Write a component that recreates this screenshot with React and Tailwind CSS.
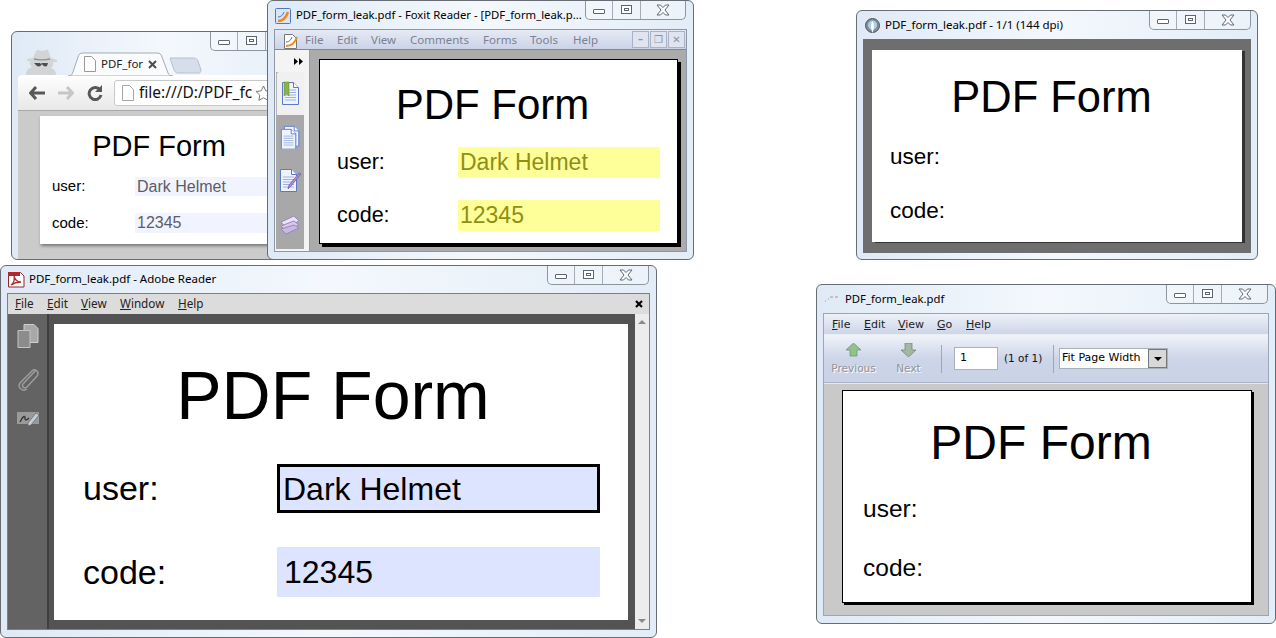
const sans = { fontFamily: '"Liberation Sans", Arial, sans-serif' };
const ui = { fontFamily: '"Noto Sans", sans-serif' };
const tah = { fontFamily: '"DejaVu Sans", sans-serif' };

function Caption({ closeW = "w-[45px]" }) {
  return (
    <div className="flex h-[19px] shrink-0 rounded-b-[5px] border border-t-0 border-[#8d959e] bg-white/30">
      <div className="flex w-[27px] items-center justify-center border-r border-[#a4acb5]">
        <div className="mt-[2px] h-[5px] w-[12px] rounded-[1px] border border-[#5c6670] bg-white"></div>
      </div>
      <div className="flex w-[28px] items-center justify-center border-r border-[#a4acb5]">
        <div className="mt-[-1px] flex h-[9px] w-[11px] items-center justify-center border border-[#5c6670] bg-white">
          <div className="h-[3px] w-[5px] border border-[#5c6670]"></div>
        </div>
      </div>
      <div className={`flex items-center justify-center ${closeW}`}>
        <svg width="14" height="12" viewBox="0 0 14 12">
          <path d="M1 1h3.500L7 3.500 9.500 1H13L9 6l4 5H9.500L7 8.500 4.500 11H1l4-5z" fill="#f8fafc" stroke="#616a73" strokeWidth="1" strokeLinejoin="round" />
        </svg>
      </div>
    </div>
  );
}

function Doc({ fill = "#eef3ff", stroke = "#5b79c9" }) {
  return (
    <>
      <path d="M1.500 1.500h11l5 5v17h-16z" fill={fill} stroke={stroke} />
      <path d="M12.500 1.500v5h5" fill="#fff" stroke={stroke} />
      <path d="M4 9h11M4 11.500h11M4 14h11M4 16.500h11M4 19h11" stroke="#9db2e2" />
    </>
  );
}

function Form({ page, title, titleText = "PDF Form", label, labelBox, rowOne, rowTwo, field, fieldOne, fieldTwo, valueOne, valueTwo, children }) {
  return (
    <div className={`flex flex-col bg-white text-black ${page}`} style={sans}>
      <div className={`text-center leading-none ${title}`}>{titleText}</div>
      <div className={`flex items-center ${rowOne}`}>
        <span className={`shrink-0 ${labelBox} ${label}`}>user:</span>
        {field && <div className={`flex h-full items-center ${fieldOne || field}`}>{valueOne}</div>}
      </div>
      <div className={`flex items-center ${rowTwo}`}>
        <span className={`shrink-0 ${labelBox} ${label}`}>code:</span>
        {field && <div className={`flex h-full items-center ${fieldTwo || field}`}>{valueTwo}</div>}
      </div>
      {children}
    </div>
  );
}

const glass = "bg-gradient-to-r from-[#dfeaf6] via-[#f4f8fd] to-[#e3edf7]";

function ChromeWindow() {
  return (
    <div className={`absolute left-[11px] top-[31px] flex h-[229px] w-[309px] flex-col overflow-hidden rounded-[6px] border border-[#686d73] ${glass}`}>
      <div className="flex h-[43px] shrink-0 items-start pl-[11px] pr-[7px]">
        <svg className="mt-[15px] shrink-0" width="37" height="28" viewBox="0 0 37 28">
          <path d="M3 28c0-5 3-7 6-8-2-2-3-4-2-6H4v-2l6-1 3-7c2-2 4 0 6 0s4-2 6-1l3 8 6 2v2h-4c1 2 0 4-2 6 3 1 5 3 5 7z" fill="#d2d4d6" />
          <path d="M11 12c4 1 12 1 16 0" stroke="#8e9194" strokeWidth="1.500" fill="none" />
          <path d="M11 16h6l1 1 1-1h6l-1 3c-2 1-4 0-5-2-1 2-3 3-5 2z" fill="#4b4d4f" />
        </svg>
        <div className="relative ml-[8px] mt-[20px] flex h-[24px] w-[105px] shrink-0 items-center">
          <svg className="absolute inset-0" width="105" height="24" viewBox="0 0 105 24">
            <path d="M0 24c3 0 4-1 5-4l5-15c1-3 2-4 5-4h74c3 0 4 1 5 4l6 16c1 2 2 3 5 3z" fill="#f9fbfd" stroke="#a4abb2" />
          </svg>
          <svg className="relative ml-[16px] shrink-0" width="12" height="16" viewBox="0 0 12 16">
            <path d="M.5.5h7l4 4v11H.5z" fill="#fff" stroke="#9a9a9a" />
          </svg>
          <span className="relative ml-[5px] w-[42px] whitespace-nowrap text-[11.500px] text-[#222]" style={ui}>PDF_for</span>
          <svg className="relative ml-[5px]" width="9" height="9" viewBox="0 0 9 9">
            <path d="M1 1l7 7M8 1L1 8" stroke="#4c4c4c" strokeWidth="2" />
          </svg>
        </div>
        <svg className="ml-[-4px] mt-[25px] shrink-0" width="33" height="17" viewBox="0 0 33 17">
          <path d="M1 1h24c2 0 3 1 4 3l3 9c0 2-1 3-2 3H9c-2 0-3-1-4-3z" fill="#d5deea" stroke="#b6c0cc" />
        </svg>
        <div className="flex-1"></div>
        <Caption />
      </div>
      <div className="ml-[6px] flex h-[36px] shrink-0 items-center rounded-t-[4px] border-b border-[#a9a9a9] bg-gradient-to-b from-white to-[#e8e8e8] pl-[11px]">
        <svg width="16" height="14" viewBox="0 0 16 14">
          <path d="M7 1L1.500 7 7 13M2 7h14" fill="none" stroke="#585858" strokeWidth="3" />
        </svg>
        <svg className="ml-[13px]" width="16" height="14" viewBox="0 0 16 14">
          <path d="M9 1l5.500 6L9 13M14 7H0" fill="none" stroke="#c6c6c6" strokeWidth="3" />
        </svg>
        <svg className="ml-[13px]" width="16" height="16" viewBox="0 0 16 16">
          <path d="M13 5a6 6 0 1 0 1 5" fill="none" stroke="#585858" strokeWidth="3" />
          <path d="M15 0v7H8z" fill="#585858" />
        </svg>
        <div className="ml-[11px] flex h-[26px] flex-1 items-center overflow-hidden rounded-[3px] border border-[#c8c8c8] bg-white pl-[7px]">
          <svg className="shrink-0" width="12" height="16" viewBox="0 0 12 16">
            <path d="M.5.5h7l4 4v11H.5z" fill="#fff" stroke="#a5a5a5" />
          </svg>
          <span className="ml-[5px] whitespace-nowrap text-[15.500px] text-[#111]" style={ui}>file:///D:/PDF_fc</span>
          <svg className="ml-[3px] shrink-0" width="17" height="16" viewBox="0 0 17 16">
            <path d="M8.500 1l2.300 4.800 5.200.7-3.800 3.600.9 5.200-4.600-2.500-4.600 2.500.9-5.200L1 6.500l5.200-.7z" fill="#fff" stroke="#777" />
          </svg>
        </div>
      </div>
      <div className="ml-[6px] flex-1 bg-[#cbcbcb] pl-[22px] pt-[5px]">
        <Form
          page="h-[128px] w-[265px] pt-[16px] pl-[12px] shadow-[1px_2px_3px_#777]"
          title="pr-[39px] text-[29px]"
          label="text-[15px]"
          labelBox="w-[83px]"
          rowOne="mt-[16px] h-[19px]"
          rowTwo="mt-[17px] h-[20px]"
          field="w-[160px] bg-[#f1f4ff] pl-[2px] text-[16px] text-[#5b5d66]"
          valueOne="Dark Helmet"
          valueTwo="12345"
        />
      </div>
    </div>
  );
}

function FoxitWindow() {
  const menu = [["File", "w-[32px]"], ["Edit", "w-[34px]"], ["View", "w-[39px]"], ["Comments", "w-[73px]"], ["Forms", "w-[47px]"], ["Tools", "w-[43px]"], ["Help", "w-[40px]"]];
  return (
    <div className={`absolute left-[267px] top-0 flex h-[260px] w-[427px] flex-col rounded-[6px] border border-[#686d73] ${glass}`}>
      <div className="flex h-[28px] shrink-0 items-start pl-[7px] pr-[7px]">
        <svg className="mt-[7px] shrink-0" width="16" height="16" viewBox="0 0 16 16">
          <rect x=".5" y=".5" width="15" height="15" rx="1" fill="#d8e4f7" stroke="#4e78c4" />
          <path d="M3 13c5 0 8-3 10-9" fill="none" stroke="#ef8a1d" strokeWidth="2.500" />
          <path d="M3 9c3 0 5-2 6-5" fill="none" stroke="#4e78c4" />
        </svg>
        <span className="ml-[5px] mt-[5px] min-w-0 flex-1 whitespace-nowrap text-[11.300px] leading-[18px] text-black" style={ui}>PDF_form_leak.pdf - Foxit Reader - [PDF_form_leak.p...</span>
        <Caption closeW="w-[44px]" />
      </div>
      <div className="ml-[6px] mr-[6px] flex h-[223px] flex-col border border-[#8c98a8] bg-[#f4f4f4]">
        <div className="flex h-[20px] shrink-0 items-center border-b border-[#7f8a99] bg-gradient-to-b from-[#e6eaf5] to-[#cbd3e8] pl-[9px] pr-[1px]">
          <svg className="shrink-0" width="14" height="18" viewBox="0 0 14 18">
            <path d="M.5 3.500h8l4 4V17.500H.5z" fill="#fff" stroke="#777" />
            <path d="M2 15c5 0 9-3 11-9" fill="none" stroke="#ef8a1d" strokeWidth="2" />
            <path d="M2 11c3 0 5-2 6-5" fill="none" stroke="#4e78c4" />
          </svg>
          <div className="ml-[7px] flex flex-1 text-[11.500px] text-[#7b8190]" style={ui}>
            {menu.map(([t, w]) => <span key={t} className={w}>{t}</span>)}
          </div>
          {["–", "❐", "✕"].map((g, i) => (
            <div key={i} className="ml-[1px] flex h-[17px] w-[17px] items-center justify-center border border-[#a9b3c3] bg-[#dfe4f0] text-[10px] font-bold leading-none text-[#8a93a3]" style={tah}>{g}</div>
          ))}
        </div>
        <div className="flex flex-1 overflow-hidden">
          <div className="flex w-[35px] shrink-0 flex-col border-r border-[#9a9a9a] bg-[#f4f4f4]">
            <div className="flex h-[22px] shrink-0 items-center justify-end pr-[6px]">
              <svg width="9" height="7" viewBox="0 0 9 7"><path d="M0 0l4 3.500L0 7zM5 0l4 3.500L5 7z" fill="#000" /></svg>
            </div>
            <div className="mb-[2px] ml-[1px] mr-[5px] flex flex-1 flex-col bg-[#a8a8a8]">
              <div className="flex h-[43px] shrink-0 items-center justify-center rounded-tl-[3px] border-l border-[#b5b5b5] bg-[#f0f0f0]">
                <svg width="19" height="25" viewBox="0 0 19 25">
                  <Doc />
                  <path d="M3 1h5v14l-2.500-2L3 15z" fill="#8bb34a" stroke="#5e8a2a" strokeWidth=".5" />
                </svg>
              </div>
              <div className="mt-[10px] flex justify-center">
                <svg width="20" height="24" viewBox="0 0 20 24">
                  <g transform="translate(3 0) scale(.9)"><Doc /></g>
                  <g transform="translate(0 3) scale(.9)"><Doc /></g>
                </svg>
              </div>
              <div className="mt-[19px] flex justify-center">
                <svg width="23" height="24" viewBox="0 0 23 24">
                  <Doc />
                  <path d="M9 21l1-4 10-12 2 1-10 12z" fill="#a98ed0" stroke="#6f55a0" strokeWidth=".7" />
                </svg>
              </div>
              <div className="mt-[23px] flex justify-center">
                <svg width="20" height="20" viewBox="0 0 20 20">
                  <path d="M1 7L14 1l5 5-13 7z" fill="#e9e2f5" stroke="#9a86c0" />
                  <path d="M1 11l13-5 5 4-13 6z" fill="#d6c9ea" stroke="#9a86c0" />
                  <path d="M1 14l13-4 5 3-13 6z" fill="#c9b8e2" stroke="#9a86c0" />
                </svg>
              </div>
            </div>
          </div>
          <div className="flex-1 bg-[#ababab] pl-[9px] pt-[9px]">
            <Form
              page="h-[185px] w-[359px] border border-black pl-[17px] pt-[24px] shadow-[3px_3px_0_#000]"
              title="pr-[29px] text-[42px]"
              label="text-[21.500px]"
              labelBox="w-[121px]"
              rowOne="mt-[21px] h-[31px]"
              rowTwo="mt-[22px] h-[31px]"
              field="w-[202px] bg-[#ffff99] pl-[2px] text-[23px] text-[#8f8f14]"
              valueOne="Dark Helmet"
              valueTwo="12345"
            />
          </div>
        </div>
      </div>
    </div>
  );
}

function AdobeWindow() {
  const menu = [["F", "ile", "w-[32px]"], ["E", "dit", "w-[34px]"], ["V", "iew", "w-[39px]"], ["W", "indow", "w-[58px]"], ["H", "elp", "w-[40px]"]];
  return (
    <div className={`absolute left-0 top-[265px] flex h-[373px] w-[657px] flex-col rounded-[6px] border border-[#686d73] ${glass}`}>
      <div className="flex h-[27px] shrink-0 items-start pl-[7px] pr-[7px]">
        <svg className="mt-[5px] shrink-0" width="17" height="17" viewBox="0 0 17 17">
          <path d="M.5 1.500h12l3.500 3.500v11H.5z" fill="#fff" stroke="#8a2a2a" />
          <path d="M0 1h12v4H0z" fill="#b5282a" />
          <path d="M3 14c3-2 4-6 3-9 1 4 3 6 7 6-3 0-7 1-10 3z" fill="none" stroke="#b5282a" strokeWidth="1.300" />
        </svg>
        <span className="ml-[4px] mt-[4px] flex-1 whitespace-nowrap text-[11.500px] leading-[18px] text-black" style={ui}>PDF_form_leak.pdf - Adobe Reader</span>
        <Caption />
      </div>
      <div className="mx-[6px] flex h-[337px] flex-col border border-[#7f7f7f] bg-[#535353]">
        <div className="flex h-[20px] shrink-0 items-center bg-[#dcdcdc] pl-[7px] pr-[6px] text-[11.700px] text-[#222]" style={ui}>
          <div className="flex flex-1">
            {menu.map(([a, b, w]) => <span key={a} className={w}><span className="underline">{a}</span>{b}</span>)}
          </div>
          <svg width="8" height="8" viewBox="0 0 8 8"><path d="M1 1l6 6M7 1L1 7" stroke="#000" strokeWidth="2.200" /></svg>
        </div>
        <div className="flex min-h-0 flex-1">
          <div className="flex w-[41px] shrink-0 flex-col items-center border-r-2 border-[#3f3f3f] bg-[#636363] pt-[10px]">
            <svg width="22" height="24" viewBox="0 0 22 24">
              <path d="M7 .5h10l4 4v14H7z" fill="#a8a8a8" stroke="#d0d0d0" />
              <path d="M1 6.500h12v17H1z" fill="#8c8c8c" stroke="#c4c4c4" />
            </svg>
            <svg className="mt-[19px]" width="22" height="24" viewBox="0 0 22 24">
              <path d="M19 3L6 17c-2 3 2 5 4 3L20 9c3-4-2-8-5-5L3 16c-3 5 3 9 7 6" fill="none" stroke="#9c9c9c" strokeWidth="1.500" />
            </svg>
            <svg className="mt-[18px]" width="24" height="20" viewBox="0 0 24 20">
              <path d="M1 3h22v12H1z" fill="#9a9a9a" />
              <path d="M4 13c3-6 5-7 5-4 0 3 2 2 4 0" fill="none" stroke="#333" strokeWidth="1.300" />
              <path d="M12 17l3-1 8-10-3-2-8 10z" fill="#c5ced8" stroke="#555" strokeWidth=".6" />
            </svg>
          </div>
          <div className="min-w-0 flex-1 pl-[5px] pr-[7px] pt-[10px]">
            <Form
              page="h-[296px] w-[574px] pl-[29px] pt-[37px]"
              title="pr-[45px] text-[68px]"
              label="text-[34px]"
              labelBox="w-[194px]"
              rowOne="mt-[35px] h-[49px]"
              rowTwo="mt-[34px] h-[50px]"
              field="w-[323px] bg-[#dde4ff] pl-[7px] text-[32px] text-black"
              fieldOne="w-[323px] border-[3px] border-black bg-[#dde4ff] pl-[3px] text-[32px] text-black"
              valueOne="Dark Helmet"
              valueTwo="12345"
            />
          </div>
          <div className="flex w-[14px] shrink-0 flex-col items-center justify-between bg-[#ececec] py-[6px]">
            <div className="h-0 w-0 border-x-[4px] border-b-[4px] border-x-transparent border-b-[#8a8a8a]"></div>
            <div className="h-0 w-0 border-x-[4px] border-t-[4px] border-x-transparent border-t-[#8a8a8a]"></div>
          </div>
        </div>
      </div>
    </div>
  );
}

function XpdfWindow() {
  return (
    <div className={`absolute left-[856px] top-[10px] flex h-[250px] w-[402px] flex-col rounded-[6px] border border-[#686d73] ${glass}`}>
      <div className="flex h-[28px] shrink-0 items-start pl-[8px] pr-[6px]">
        <svg className="mt-[7px] shrink-0" width="15" height="16" viewBox="0 0 15 16">
          <circle cx="7.500" cy="7.500" r="7" fill="#7f8c99" stroke="#4c5660" />
          <circle cx="7.500" cy="7" r="4.500" fill="#a9d0ee" />
          <path d="M7.500 3c-2 3-2 7 0 12 2-5 2-9 0-12z" fill="#fff" />
        </svg>
        <span className="ml-[5px] mt-[5px] flex-1 whitespace-nowrap text-[11.500px] leading-[18px] text-black" style={ui}>PDF_form_leak.pdf - 1/1 (144 dpi)</span>
        <Caption />
      </div>
      <div className="mx-[6px] h-[214px] bg-[#6e6e6e] pl-[9px] pt-[11px]">
        <Form
          page="h-[192px] w-[370px] pl-[18px] pt-[26px] shadow-[3px_1px_0_#333]"
          title="pr-[29px] text-[43.500px]"
          label="text-[22.500px]"
          labelBox="w-[121px]"
          rowOne="mt-[22px] h-[30px]"
          rowTwo="mt-[24px] h-[30px]"
        />
      </div>
    </div>
  );
}

function EvinceWindow() {
  const menu = [["F", "ile", "w-[32px]"], ["E", "dit", "w-[34px]"], ["V", "iew", "w-[39px]"], ["G", "o", "w-[29px]"], ["H", "elp", "w-[40px]"]];
  return (
    <div className={`absolute left-[816px] top-[284px] flex h-[340px] w-[460px] flex-col rounded-[6px] border border-[#686d73] ${glass}`}>
      <div className="flex h-[28px] shrink-0 items-start pl-[8px] pr-[7px]">
        <svg className="mt-[11px] shrink-0" width="14" height="6" viewBox="0 0 14 6">
          <path d="M0 5h1M3 3h1M5 1h3M10 1h3" stroke="#9a9a9a" strokeWidth="1" />
        </svg>
        <span className="ml-[6px] mt-[5px] flex-1 whitespace-nowrap text-[11.300px] leading-[18px] text-black" style={ui}>PDF_form_leak.pdf</span>
        <Caption />
      </div>
      <div className="mx-[6px] flex h-[303px] flex-col border border-[#9aa5b5] bg-[#c9c9c9]">
        <div className="flex h-[21px] shrink-0 items-center border-b border-[#e9edf6] bg-gradient-to-b from-[#eef1f8] to-[#cdd5e8] pl-[8px] pt-[2px] text-[11px] text-[#222]" style={tah}>
          {menu.map(([a, b, w]) => <span key={a} className={w}><span className="underline">{a}</span>{b}</span>)}
        </div>
        <div className="flex h-[48px] shrink-0 items-center border-b border-[#aab3c7] bg-gradient-to-b from-[#f0f3f9] via-[#cdd5e8] to-[#c9d2e6] text-[11px]" style={tah}>
          <div className="ml-[2px] flex w-[55px] flex-col items-center">
            <svg width="15" height="14" viewBox="0 0 15 14"><path d="M7.500 0L15 7h-4v6H4V7H0z" fill="#8cc48c" stroke="#6a8f6a" strokeWidth=".7" /></svg>
            <span className="mt-[6px] text-[10.500px] leading-none text-[#8e939c] [text-shadow:1px_1px_0_#fff]">Previous</span>
          </div>
          <div className="ml-[9px] flex w-[37px] flex-col items-center">
            <svg width="15" height="14" viewBox="0 0 15 14"><path d="M4 0h7v7h4l-7.500 7L0 7h4z" fill="#a3b7a3" stroke="#6f7f6f" strokeWidth=".7" /></svg>
            <span className="mt-[6px] text-[10.500px] leading-none text-[#8e939c] [text-shadow:1px_1px_0_#fff]">Next</span>
          </div>
          <div className="ml-[14px] h-[28px] w-px bg-[#9ea6b8]"></div>
          <div className="ml-[12px] flex h-[23px] w-[44px] items-center border border-[#aab0bc] bg-white pl-[5px] text-black">1</div>
          <span className="ml-[6px] w-[45px] whitespace-nowrap text-[10.500px] text-[#111]">(1 of 1)</span>
          <div className="ml-[4px] h-[28px] w-px bg-[#9ea6b8]"></div>
          <div className="ml-[5px] flex h-[21px] w-[109px] items-center border border-[#aab0bc] bg-white pl-[2px] text-black">
            <span className="flex-1 whitespace-nowrap">Fit Page Width</span>
            <div className="flex h-[19px] w-[19px] items-center justify-center border border-[#777] bg-[#d8d8d8]">
              <div className="h-0 w-0 border-x-[4px] border-t-[4px] border-x-transparent border-t-black"></div>
            </div>
          </div>
        </div>
        <div className="flex-1 border-t border-[#e8e8e8] pl-[18px] pt-[6px]">
          <Form
            page="h-[213px] w-[410px] border border-black pl-[20px] pt-[28px] shadow-[2px_2px_0_#000]"
            title="pr-[32px] text-[48px]"
            label="text-[24.500px]"
            labelBox="w-[121px]"
            rowOne="mt-[27px] h-[30px]"
            rowTwo="mt-[29px] h-[30px]"
          />
        </div>
      </div>
    </div>
  );
}

export default function App() {
  return (
    <div className="relative h-[638px] w-[1276px] overflow-hidden bg-white">
      <ChromeWindow />
      <FoxitWindow />
      <AdobeWindow />
      <XpdfWindow />
      <EvinceWindow />
    </div>
  );
}
